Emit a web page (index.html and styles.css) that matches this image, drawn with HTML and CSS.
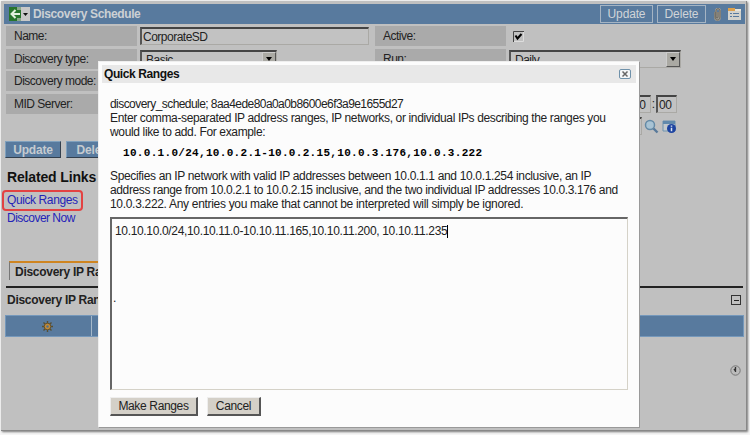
FILE: index.html
```html
<!DOCTYPE html>
<html lang="en">
<head>
<meta charset="utf-8">
<title>Discovery Schedule</title>
<link rel="stylesheet" href="styles.css">
</head>
<body>
<main class="window">
  <header class="titlebar">
    <span class="back">
      <svg width="21" height="14" viewBox="0 0 21 14"><path fill="#c8c8c8" d="M0 0h21v14H0z"/><path fill="#28752c" d="M0 0h12v14H0z"/><path fill="#8aa98a" d="M8 0h4v3H8zM8 11h4v3H8z"/><path d="M6.5 3 2.5 7l4 4M3 7h8" fill="none" stroke="#e2f0de" stroke-width="2"/><path d="m14 6 2.5 3L19 6z" fill="#111"/></svg>
    </span>
    <h1><span class="t-title">Discovery Schedule</span></h1>
    <button class="head-btn upd">Update</button>
    <button class="head-btn del">Delete</button>
    <svg class="clip" width="9" height="13" viewBox="0 0 9 13"><path d="M2 4v5c0 4 5 4 5 0V3c0-3-4-3-4 0v6c0 1.5 2 1.5 2 0V4" fill="none" stroke="#a39f94" stroke-width="2"/><path d="M2 4v5c0 4 5 4 5 0V3c0-3-4-3-4 0v6c0 1.5 2 1.5 2 0V4" fill="none" stroke="#5e5c57" stroke-width=".9"/></svg>
    <svg class="list" width="13" height="12" viewBox="0 0 13 12"><path fill="#d2d2cc" d="M0 1h13v11H0z"/><path fill="#dda04b" d="M0 0h7v3H0z"/><path fill="#e7e4da" d="M7 1h6v2H7z"/><path d="M2 5.5h2m1 0h6M2 8.5h2m1 0h6" stroke="#587a9e"/></svg>
  </header>
  <section class="form">
    <div class="column left">
      <div class="row"><label><span class="t-label">Name:</span></label><div class="field name-field"><span class="t-label">CorporateSD</span></div></div>
      <div class="row"><label><span class="t-label">Discovery type:</span></label><div class="field select type-select"><span class="t-label">Basic</span><i class="arrow"></i></div></div>
      <div class="row"><label><span class="t-label">Discovery mode:</span></label></div>
      <div class="row"><label><span class="t-label">MID Server:</span></label></div>
    </div>
    <div class="column right">
      <div class="row"><label><span class="t-label">Active:</span></label><svg class="check" width="11" height="11" viewBox="0 0 11 11"><path d="M.5 11V.5H11" fill="none" stroke="#444"/><path d="M10.5 1v9.5H1" fill="none" stroke="#ddd"/><path d="m2.5 4.5 2 3 4-4.5" fill="none" stroke="#000" stroke-width="2"/></svg></div>
      <div class="row"><label><span class="t-label">Run:</span></label><div class="field select run-select"><span class="t-label">Daily</span><i class="arrow"></i></div></div>
      <div class="row"></div>
      <div class="row time"><div class="field digit">00</div><b>:</b><div class="field digit">00</div></div>
      <div class="row lookup"><div class="field tiny"></div>
        <svg width="15" height="15" viewBox="0 0 15 15"><circle cx="6" cy="6" r="4.5" fill="#a8c3d4" stroke="#648aa6" stroke-width="1.5"/><path d="m9.5 9.5 4 4" stroke="#58799a" stroke-width="2.4"/></svg>
        <svg width="15" height="15" viewBox="0 0 15 15"><path d="M1 2h12v10H1z" fill="#c3c9cc" stroke="#6f93af"/><path d="M1 2h12v3H1z" fill="#6189ac"/><circle cx="9.5" cy="9.5" r="4.5" fill="#1c43a0"/><path d="M9.5 6.4v1.4m0 1v3.5" stroke="#dce4ef" stroke-width="1.5"/></svg>
      </div>
    </div>
  </section>
  <div class="actions"><button class="action a1"><span>Update</span></button><button class="action a2"><span>Delete</span></button></div>
  <nav class="related">
    <h2><span class="t-related">Related Links</span></h2>
    <a class="marked"><span>Quick Ranges</span></a>
    <a><span class="t-now">Discover Now</span></a>
  </nav>
  <div class="tab"><span>Discovery IP Ranges</span></div>
  <div class="list-head"><span>Discovery IP Ran</span><i class="collapse"></i></div>
  <div class="columns"><div class="cell">
    <svg width="11" height="11" viewBox="0 0 11 11"><path d="M5.5 0v11M0 5.5h11M1.5 1.5l8 8m0-8-8 8" stroke="#544f36" stroke-width="1.4"/><circle cx="5.5" cy="5.5" r="3.3" fill="#c28b37" stroke="#65522e"/><circle cx="5.5" cy="5.5" r="1.2" fill="#536f89"/></svg>
  </div><div class="cell"></div></div>
  <svg class="clock" width="11" height="11" viewBox="0 0 11 11"><circle cx="5.5" cy="5.5" r="4.7" fill="#bbb" stroke="#777"/><path d="M5.5 2v5M4 4l1.5 2" fill="none" stroke="#333" stroke-width="1.3"/></svg>
</main>
<section class="dialog" role="dialog">
  <header><h2><span class="t-dlg">Quick Ranges</span></h2>
    <svg width="12" height="10" viewBox="0 0 12 10"><rect x=".5" y=".5" width="11" height="9" rx="1.5" fill="#f4f6f7" stroke="#6f91aa"/><path d="m3.5 2.5 5 5m0-5-5 5" stroke="#666" stroke-width="1.5"/></svg>
  </header>
  <div class="content">
    <p><span class="l1">discovery_schedule; 8aa4ede80a0a0b8600e6f3a9e1655d27</span><span class="l2">Enter comma-separated IP address ranges, IP networks, or individual IPs describing the ranges you</span><span class="l3">would like to add. For example:</span></p>
    <pre><span class="mono">10.0.1.0/24,10.0.2.1-10.0.2.15,10.0.3.176,10.0.3.222</span></pre>
    <p><span class="l4">Specifies an IP network with valid IP addresses between 10.0.1.1 and 10.0.1.254 inclusive, an IP</span><span class="l5">address range from 10.0.2.1 to 10.0.2.15 inclusive, and the two individual IP addresses 10.0.3.176 and</span><span class="l6">10.0.3.222. Any entries you make that cannot be interpreted will simply be ignored.</span></p>
    <div class="textarea"><span class="entry">10.10.10.0/24,10.10.11.0-10.10.11.165,10.10.11.200, 10.10.11.235</span><i class="caret"></i><div class="dot">.</div></div>
    <div class="buttons"><button class="make"><span>Make Ranges</span></button><button class="cancel"><span>Cancel</span></button></div>
  </div>
</section>
</body>
</html>
```
FILE: styles.css
```css
* { box-sizing: border-box; }
body { margin: 0; width: 750px; height: 435px; overflow: hidden; background: #f6f6f6; font: 12px/14px "Liberation Sans", Arial, sans-serif; color: #222; padding: 1px; }
h1, h2, p, pre { margin: 0; }
button { font: inherit; padding: 0; }
span { white-space: nowrap; }
svg { flex: none; display: block; }
.window { width: 746px; height: 430px; background: #c0c0c0; padding: 3px 1px 0 3px; border-right: 1px solid #888; border-bottom: 1px solid #888; box-shadow: 1px 1px 2px #777; }
.titlebar { height: 20px; background: #587a9e; display: flex; align-items: center; padding-left: 5px; }
.titlebar h1 { font-size: 12px; line-height: 20px; color: #ccd0d4; margin-left: 3px; flex: 1; letter-spacing: -.37px; }
.head-btn { height: 18px; border: 1px solid #a5b4c3; background: #587a9e; color: #d0d4d8; letter-spacing: -.15px; }
.upd { width: 53px; margin-right: 4px; }
.del { width: 49px; margin-right: 7px; }
.clip { margin-right: 6px; }
.list { margin-right: 4px; }
.form { display: flex; gap: 6px; padding: 2px 0 0 2px; height: 117px; }
.column { display: flex; flex-direction: column; gap: 2.5px; }
.left { width: 363px; }
.row { display: flex; align-items: center; height: 20px; flex: none; }
.t-label { letter-spacing: -.5px; }
label { width: 131px; height: 20px; background: #aaa; padding-left: 8px; line-height: 21px; margin-right: 3px; }
.field { border: 1px solid #aaa9a5; border-top: 2px solid #444; border-left: 2px solid #555; height: 18px; line-height: 16px; background: #c2c2c2; padding-left: 1px; overflow: hidden; }
.name-field { width: 229px; }
.select { display: flex; justify-content: space-between; padding-left: 4px; }
.type-select { width: 137px; }
.run-select { width: 172px; }
.arrow { width: 14px; height: 15px; background: #aaa9a3; border: 1px solid #ccc; border-right-color: #555; border-bottom-color: #555; display: grid; place-items: center; }
.arrow::before { content: ""; border: 3px solid transparent; border-top: 4px solid #000; border-bottom: 0; }
.check { margin-left: 4px; }
.time { padding-left: 255px; }
.digit { width: 21px; letter-spacing: -.5px; }
.time b { font-weight: 400; width: 5px; text-align: center; }
.lookup { padding-left: 255px; gap: 3px; }
.tiny { width: 12px; margin-right: -1px; }
.actions { display: flex; gap: 5px; padding-left: 1px; height: 17px; }
.action { height: 17px; background: #587a9e; border: 1px solid #7fa0bd; border-right-color: #333f4d; border-bottom-color: #333f4d; color: #c5cbd0; font-weight: 700; letter-spacing: -.2px; }
.a1 { width: 56px; } .a2 { width: 56px; }
.related { padding: 11px 0 0 3px; display: flex; flex-direction: column; align-items: flex-start; color: #2424b8; }
.related h2 { font-size: 14px; line-height: 16px; color: #111; margin-bottom: 7px; letter-spacing: -.15px; }
.related a { height: 17px; line-height: 17px; }
.related .marked { margin: -2px 0 -1px -5px; padding: 0 3px; width: 81px; height: 21px; border: 2px solid #e34242; border-radius: 4px; letter-spacing: -.4px; }
.t-now { letter-spacing: -.52px; }
.tab { width: 140px; height: 19px; margin: 34px 0 0 5px; border-top: 2px solid #cf8521; border-left: 1px solid #777; padding: 1px 0 0 5px; line-height: 17px; font-weight: 700; letter-spacing: -.28px; }
.list-head { margin: 6px 2px 0 2px; border-top: 2px solid #222; height: 29px; padding: 4px 2px 0 1px; line-height: 17px; font-weight: 700; display: flex; justify-content: space-between; letter-spacing: -.28px; }
.collapse { width: 10px; height: 10px; border: 1px solid #333; display: grid; place-items: center; margin-top: 3px; }
.collapse::before { content: ""; width: 5px; height: 1px; background: #222; }
.columns { height: 22px; border: 1px solid #7598bb; background: #587a9e; display: flex; margin: 0 1px; }
.cell:first-child { width: 86px; border-right: 1px solid #a5b8c9; display: grid; place-items: center; padding-right: 3px; }
.clock { margin: 28px 4px 0 auto; }
.dialog { position: absolute; left: 98px; top: 61px; width: 542px; height: 367px; background: #fcfcfc; padding: 4px 3px; border: 1px solid #eee; border-right-color: #999; border-bottom-color: #999; }
.dialog header { background: #e8e8e8; height: 18px; margin-top: -1px; display: flex; justify-content: space-between; align-items: center; padding: 0 5px 0 2px; }
.dialog h2 { font-size: 12px; line-height: 20px; color: #111; letter-spacing: -.4px; }
.dialog .content { padding: 14px 8px 0; }
.dialog p span { display: block; width: max-content; }
.l1 { letter-spacing: -.56px; }
.l2 { letter-spacing: -.36px; }
.l3 { letter-spacing: -.35px; }
.l4 { letter-spacing: -.34px; }
.l5 { letter-spacing: -.37px; }
.l6 { letter-spacing: -.31px; }
.entry { letter-spacing: -.34px; }
.dialog pre { font: 700 11px/14px "Liberation Mono", monospace; color: #000; padding: 7px 0 9px 13px; letter-spacing: .31px; }
.textarea { width: 518px; height: 173px; margin-top: 6px; border: 1px solid #d5d2c8; border-top: 2px solid #666; border-left: 2px solid #666; padding: 5px 0 0 3px; }
.caret { display: inline-block; width: 1px; height: 13px; background: #000; vertical-align: -3px; }
.dot { margin: 53px 0 0 -2px; }
.buttons { display: flex; gap: 9px; margin-top: 7px; }
.buttons button { height: 19px; background: #d4d0c8; border: 1px solid #eee; border-right: 2px solid #555; border-bottom: 2px solid #555; color: #222; letter-spacing: -.35px; }
.make { width: 88px; } .cancel { width: 54px; }
```
